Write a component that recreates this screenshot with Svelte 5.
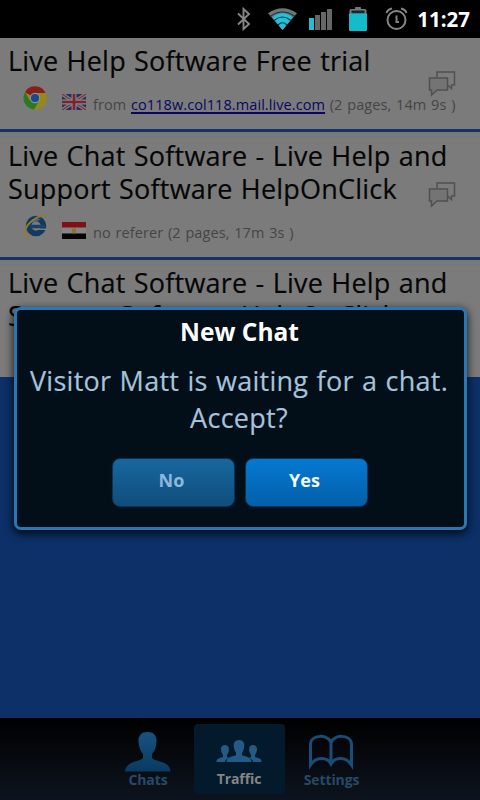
<script>
  const visitors = [
    { lines: ['Live Help Software Free trial'], browser: 'chrome', flag: 'uk', link: 'co118w.col118.mail.live.com', before: 'from', after: '(2 pages, 14m 9s )' },
    { lines: ['Live Chat Software - Live Help and', 'Support Software HelpOnClick'], browser: 'ie', flag: 'egypt', before: 'no referer (2 pages, 17m 3s )' },
    { lines: ['Live Chat Software - Live Help and', 'Support Software HelpOnClick'], hideBubbles: true }
  ];
</script>

<div class="screen">
  <header class="status">
    <svg width="232" height="38" viewBox="236 0 232 38" aria-hidden="true">
      <path d="M238 13.500 L249 24 L243.500 29 V9 L249 14 L238 24.500" fill="none" stroke="#858585" stroke-width="1.900" />
      <path d="M268 13.200 Q282.500 3.300 297 13.200 L282.500 30 Z" fill="#6f7475" />
      <path d="M272.500 17.200 Q282.500 9.500 292.500 17.200 L282.500 30 Z" fill="#25bfd8" />
      <path d="M270.500 16.300 Q282.500 7.700 294.500 16.300 M274 20.500 Q282.500 13.500 291 20.500 M278 25 Q282.500 20.500 287 25" fill="none" stroke="#033844" stroke-width="1.100" />
      <rect x="309" y="18" width="5" height="12" fill="#20bfd1" />
      <rect x="315" y="15" width="5" height="15" fill="#666" />
      <rect x="321" y="12" width="5" height="18" fill="#666" />
      <rect x="327" y="9" width="5" height="21" fill="#666" />
      <rect x="355" y="7" width="6" height="3" rx="1" fill="#777" />
      <rect x="349.500" y="9" width="17" height="21" rx="1.500" fill="#777" />
      <rect x="351.500" y="10.500" width="13" height="3" fill="#102a30" />
      <path d="M349 13.500 H367 V30 Q367 31 366 31 H350 Q349 31 349 30Z" fill="#14bccb" />
      <circle cx="396.500" cy="20" r="9" fill="none" stroke="#858585" stroke-width="2" />
      <path d="M396.500 15.500 V22 H399 M386.500 13 Q387.500 9.500 392 8.500 M401 8.500 Q405.500 9.500 406.500 13" fill="none" stroke="#858585" stroke-width="1.900" />
    </svg>
    <span class="clock">11:27</span>
  </header>

  <main>
    {#each visitors as v}
      <article>
        <h2>{#each v.lines as line}<span>{line}</span>{/each}</h2>
        <div class="meta">
          {#if v.browser === 'chrome'}
            <svg class="browser" width="24" height="24" viewBox="0 0 24 24">
              <circle cx="12" cy="12" r="11.500" fill="#998813" />
              <path d="M12 12 L2 6.200 A11.500 11.500 0 0 1 22.500 7 H12Z" fill="#891d1d" />
              <path d="M2 6.200 A11.500 11.500 0 0 0 11 23.500 L16 15 L12 12 L6.800 14.200Z" fill="#2c7829" />
              <circle cx="12" cy="12" r="5.300" fill="#8a9096" />
              <circle cx="12" cy="12" r="4.100" fill="#17498c" />
            </svg>
          {:else if v.browser === 'ie'}
            <svg class="browser" width="24" height="24" viewBox="0 0 24 24">
              <circle cx="13" cy="12" r="7.500" fill="none" stroke="#123a60" stroke-width="5.500" />
              <path d="M7 12.500 H22" stroke="#15436c" stroke-width="3.500" />
              <path d="M15 14.500 H23 V16 H15Z" fill="#7b7b7b" />
              <path d="M6 9 Q10 2.500 18 5.500 Q12 8 6 9" fill="#3c6c8d" />
              <path d="M7 21.500 C-1 24 1 13 9 7 C15 2 22 0 22.500 3" fill="none" stroke="#927a32" stroke-width="2" />
            </svg>
          {/if}
          {#if v.flag === 'uk'}
            <svg class="flag" width="24" height="16" viewBox="0 0 24 16">
              <path d="M0 0H24V16H0Z" fill="#252e5c" />
              <path d="M0 0L24 16M24 0L0 16" stroke="#858085" stroke-width="3.600" />
              <path d="M0 0L24 16M24 0L0 16" stroke="#7a3038" stroke-width="1.200" />
              <path d="M12 0V16M0 8H24" stroke="#898589" stroke-width="5" />
              <path d="M12 0V16M0 8H24" stroke="#78252d" stroke-width="2.700" />
            </svg>
          {:else if v.flag === 'egypt'}
            <svg class="flag" width="24" height="17" viewBox="0 0 24 17">
              <path d="M0 0H24V6H0Z" fill="#7c1118" />
              <path d="M0 5.500H24V11.500H0Z" fill="#858585" />
              <path d="M0 11.500H24V17H0Z" fill="#050505" />
              <path d="M10 6L12 7L14 6V10L12 12L10 10Z" fill="#8a7425" />
            </svg>
          {/if}
          {#if v.before}
            <p>{v.before}{#if v.link}{' '}<a href="#top">{v.link}</a>{' '}{v.after}{/if}</p>
          {/if}
        </div>
        {#if !v.hideBubbles}
          <svg class="bubbles" width="28" height="27" viewBox="0 0 28 27">
            <path d="M9 6.500 V1.500 H26.500 V14.500 H23.500 V18 L19.500 14.500" fill="none" stroke="#505050" stroke-width="1.500" />
            <path d="M1.500 7.500 H19.500 V19.500 H9 L3.500 24.500 V19.500 H1.500Z" fill="#747474" stroke="#505050" stroke-width="1.500" />
          </svg>
        {/if}
      </article>
    {/each}
  </main>

  <nav>
    <div class="tab">
      <svg width="46" height="40" viewBox="0 0 46 40">
        <defs><linearGradient id="person" x2="0" y2="1"><stop stop-color="#17537f" /><stop offset="1" stop-color="#0a3a61" /></linearGradient></defs>
        <path d="M22.500 0 C29 0 32 4 31.500 10 C31 15 30 19 27 22 V26 C31 30 45 29 45.500 39.500 H0 C1 29 14 30 18 26 V22 C15 19 14 15 13.500 10 C13 4 16 0 22.500 0Z" fill="url(#person)" />
      </svg>
      <span>Chats</span>
    </div>
    <div class="tab active">
      <svg width="46" height="40" viewBox="0 0 46 40">
        <g fill="#245b85">
          <path d="M9 13 C13 13 13.500 17 12.500 20 L11 23 V25 L13 26 Q9.500 27 9 30 H.5 Q0 27 4 26 L7 25 V23 Q4.500 20 5 16 Q6 13 9 13Z" />
          <path d="M37 13 C33 13 32.500 17 33.500 20 L35 23 V25 L33 26 Q36.500 27 37 30 H45.500 Q46 27 42 26 L39 25 V23 Q41.500 20 41 16 Q40 13 37 13Z" />
          <path d="M23 8 C28 8 29 12 28 16 Q27.500 19 26 20.500 V23 C29 25 35 24 35.500 30 H10.500 C11 24 17 25 20 23 V20.500 Q18.500 19 18 16 C17 12 18 8 23 8Z" />
        </g>
      </svg>
      <span>Traffic</span>
    </div>
    <div class="tab">
      <svg width="46" height="40" viewBox="0 0 46 40">
        <path d="M1.500 33 V12 C2 2 20 2 22 11 C24 2 42 2 42.500 12 V33 C37 24.500 26 24.500 22 32 C18 24.500 7 24.500 1.500 33Z M22 10 V31" fill="none" stroke="#184d78" stroke-width="3" />
      </svg>
      <span>Settings</span>
    </div>
  </nav>

  <section class="dialog" role="dialog" aria-label="New Chat">
    <h1>New Chat</h1>
    <p>Visitor Matt is waiting for a chat.<br />Accept?</p>
    <div class="actions">
      <button class="no">No</button>
      <button class="yes">Yes</button>
    </div>
  </section>
</div>

<style>
  :global(body) { margin: 0; background: #0c3068; }
  .screen { position: relative; display: flex; flex-direction: column; width: 480px; height: 800px; overflow: hidden; background: #0c3067; font-family: "Open Sans", "Noto Sans", sans-serif; }
  h1, h2, p { margin: 0; font-weight: 400; }
  .status { height: 38px; flex: none; display: flex; align-items: center; justify-content: flex-end; box-sizing: border-box; padding-right: 10px; background: #000; }
  .status svg { width: 232px; margin-right: -54px; flex: none; }
  .clock { color: #fff; font-weight: 700; font-size: 20.500px; line-height: 38px; width: 56px; text-align: right; white-space: nowrap; }
  main { flex: 1; }
  article { position: relative; padding: 6px 8px 19px; border-bottom: 3px solid #193266; background: #7b7b7b; }
  article:nth-child(2) { padding-top: 7px; }
  article + article { background: linear-gradient(#757b79 7px, #7b7b7b 7px); }
  article:last-child { padding-bottom: 12px; border: 0; }
  h2 { color: #050505; font-size: 27px; line-height: 33px; white-space: nowrap; letter-spacing: .22px; word-spacing: .92px; -webkit-text-stroke: .18px #050505; }
  h2 span { display: block; }
  .meta { display: flex; height: 24px; margin-top: 9px; padding-left: 15px; }
  .browser { flex: none; }
  .flag { flex: none; margin: 8px 7px 0 15px; }
  .meta p { color: #454545; font-size: 14.500px; line-height: 24px; padding-top: 7px; margin-bottom: -8px; white-space: nowrap; letter-spacing: .08px; word-spacing: .9px; }
  a { color: #080862; text-decoration: underline; text-decoration-thickness: 1.500px; text-underline-offset: 2px; text-decoration-skip-ink: none; }
  .bubbles { position: absolute; right: 24px; top: 50%; transform: translateY(-50%); }
  nav { flex: none; box-sizing: border-box; height: 82px; display: flex; justify-content: center; gap: 1px; padding: 6px 2px 0 0; background: linear-gradient(#000, #0d131e); }
  .tab { box-sizing: border-box; width: 91px; height: 70px; display: flex; flex-direction: column; align-items: center; padding: 8px 0 0 1px; border-radius: 4px; color: #244a68; font-size: 14px; line-height: 18px; letter-spacing: -.1px; }
  .tab span { font-weight: 700; margin-top: -1px; }
  .tab:first-child span { padding-left: 1px; }
  .active { background: #021a2b; color: #858585; padding-left: 0; }
  .active span { margin-top: -2px; }
  .dialog { position: absolute; box-sizing: border-box; left: 14px; top: 307px; width: 453px; height: 223px; border: 3px solid #2978b5; border-radius: 7px; background: #020e18; box-shadow: 0 3px 9px 1px #000b; text-align: center; padding: 5px 2px 0 0; }
  h1 { color: #fff; font-size: 24.500px; line-height: 34px; font-weight: 700; }
  .dialog p { color: #a5c3db; font-size: 27px; line-height: 37px; padding-top: 13px; margin: 0 -2px 0 -3px; white-space: nowrap; letter-spacing: .28px; word-spacing: .92px; -webkit-text-stroke: .18px #a5c3db; }
  .actions { display: flex; justify-content: center; gap: 10px; margin-top: 22px; }
  button { box-sizing: border-box; width: 123px; height: 49px; margin: 0; padding: 0 3px 5px 0; border: 1px solid #063358; border-radius: 8px; font: 700 18px "Open Sans", sans-serif; }
  .no { color: #8db8da; background: linear-gradient(#17679f, #104d7b); }
  .yes { color: #f2faff; background: linear-gradient(#0479d1, #035fa9); }
</style>
